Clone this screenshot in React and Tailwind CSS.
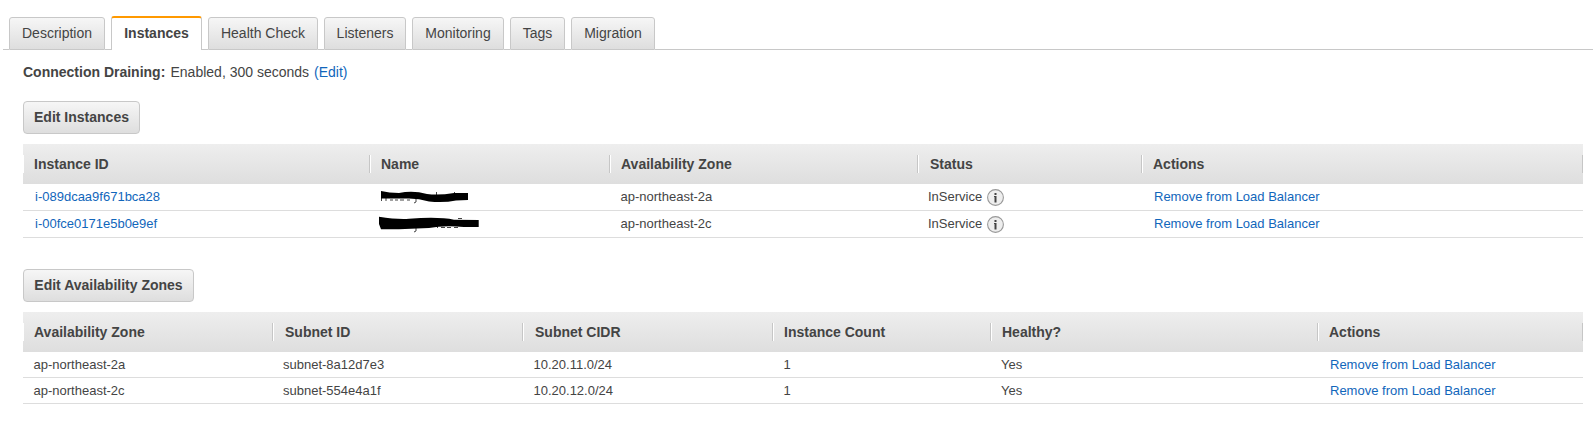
import React from "react";

const tabs = [
  { label: "Description", width: "w-24" },
  { label: "Instances", width: "w-[91px]", active: true },
  { label: "Health Check", width: "w-[110px]" },
  { label: "Listeners", width: "w-[82px]" },
  { label: "Monitoring", width: "w-[92px]" },
  { label: "Tags", width: "w-[55px]" },
  { label: "Migration", width: "w-[84px]" },
];

function Tab({ label, width, active }) {
  if (active) {
    return (
      <button
        className={`${width} h-[34px] shrink-0 rounded-t-[3px] border-x border-t-2 border-x-[#c8c8c8] border-t-[#f90] bg-white pb-[3px] text-center font-bold`}
      >
        {label}
      </button>
    );
  }
  return (
    <button
      className={`${width} h-[33px] shrink-0 rounded-t-[3px] border border-[#c8c8c8] bg-linear-to-b from-[#f6f6f6] to-[#dedede] pb-0.5 text-center`}
    >
      {label}
    </button>
  );
}

function ActionButton({ children, width }) {
  return (
    <button
      className={`${width} h-[33px] rounded-[4px] border border-[#c8c8c8] bg-linear-to-b from-[#f6f6f6] to-[#dedede] pb-0.5 text-center font-bold whitespace-nowrap`}
    >
      {children}
    </button>
  );
}

function HeaderRow({ columns, grid }) {
  return (
    <div className={`grid h-10 items-center bg-linear-to-b from-[#eeeeee] to-[#dedede] font-bold ${grid}`}>
      {columns.map((c) => (
        <div
          key={c}
          className={`flex h-[18px] items-center border-r border-l border-l-white border-r-[#c6c6c6] whitespace-nowrap ${
            c.startsWith("S") ? "pl-[11px]" : "pl-[10px]"
          }`}
        >
          {c}
        </div>
      ))}
    </div>
  );
}

function InfoIcon() {
  return (
    <svg width="17" height="17" viewBox="0 0 17 17" className="mt-px ml-[5px] shrink-0">
      <circle cx="8.5" cy="8.5" r="7.9" fill="#eeeeee" stroke="#999999" strokeWidth="1.1" />
      <rect x="7.5" y="4" width="2" height="2" fill="#444" />
      <path d="M7 7h2.500v6.500h-2V8H7z" fill="#444" />
    </svg>
  );
}

function Link({ children, className = "" }) {
  return (
    <a href="#" className={`text-[#1166bb] ${className}`}>
      {children}
    </a>
  );
}

const scribbles = {
  first:
    "M2 3Q10 5 20 5Q34 2 48 6Q60 7.500 75 5L89 5V12L77 12.500Q65 15 50 13.500Q40 10.500 30 10.500L2 10.500Z",
  second:
    "M0 1.700Q18 4.500 30 3.700Q60 1.500 75 4.700L99.700 5V12L85 12Q65 10 50 13L20 14.300L2 14.300L0 9Z",
};

const marks = {
  first: "M2.500 10v3M7 10v3M11 12h3M16 12h3M21 12h4M28 12h3M37 10v4l-2 1M57.500 4v4M75.500 4v3",
  second: "M37 13v3l-2 1M47 12.500h3M58.500 11v2M62 12.500h4M68 12.500h4M75 12.500h4M79 3.500h4",
};

function Redacted({ shape }) {
  return (
    <svg width="100" height="18" viewBox="0 0 100 18" className="ml-[9px]">
      <path d={marks[shape]} fill="none" stroke="#444" strokeWidth="1" />
      <path d={scribbles[shape]} fill="#000" />
    </svg>
  );
}

const instances = [
  { id: "i-089dcaa9f671bca28", shape: "first", zone: "ap-northeast-2a" },
  { id: "i-00fce0171e5b0e9ef", shape: "second", zone: "ap-northeast-2c" },
];

const zones = [
  { zone: "ap-northeast-2a", subnet: "subnet-8a12d7e3", cidr: "10.20.11.0/24" },
  { zone: "ap-northeast-2c", subnet: "subnet-554e4a1f", cidr: "10.20.12.0/24" },
];

const instanceGrid = "grid-cols-[347px_240px_308px_224px_441px]";
const zoneGrid = "grid-cols-[250px_250px_250px_218px_327px_265px]";

export default function App() {
  return (
    <div className="h-[423px] w-[1593px] overflow-hidden bg-white font-['Liberation_Sans',Arial,sans-serif] text-sm text-[#444]">
      <div className="flex h-[50px] pl-[3px]">
        <div className="w-1.5 border-b border-[#c8c8c8]" />
        {tabs.map((t) => (
          <React.Fragment key={t.label}>
            <div className="flex items-end">
              <Tab {...t} />
            </div>
            <div className="w-1.5 border-b border-[#c8c8c8]" />
          </React.Fragment>
        ))}
        <div className="grow border-b border-[#c8c8c8]" />
      </div>

      <div className="pl-[23px]">
        <div className="mt-3 flex h-5 items-center">
          <span className="w-[147.500px] font-bold whitespace-nowrap">Connection Draining:</span>
          <span className="w-[143.500px] whitespace-nowrap">Enabled, 300 seconds</span>
          <Link>(Edit)</Link>
        </div>

        <div className="mt-[19px] flex">
          <ActionButton width="w-[117px]">Edit Instances</ActionButton>
        </div>

        <div className="mt-2.5 w-[1560px]">
          <HeaderRow
            columns={["Instance ID", "Name", "Availability Zone", "Status", "Actions"]}
            grid={instanceGrid}
          />
          {instances.map((r) => (
            <div
              key={r.id}
              className={`grid h-[27px] items-center border-b border-[#dddddd] text-[13px] ${instanceGrid}`}
            >
              <Link className="pl-3">{r.id}</Link>
              <Redacted shape={r.shape} />
              <span className="pl-[10.500px]">{r.zone}</span>
              <span className="flex items-center pl-[10px]">
                InService
                <InfoIcon />
              </span>
              <Link className="pl-3">Remove from Load Balancer</Link>
            </div>
          ))}
        </div>

        <div className="mt-[31px] flex">
          <ActionButton width="w-[171px]">Edit Availability Zones</ActionButton>
        </div>

        <div className="mt-2.5 w-[1560px]">
          <HeaderRow
            columns={["Availability Zone", "Subnet ID", "Subnet CIDR", "Instance Count", "Healthy?", "Actions"]}
            grid={zoneGrid}
          />
          {zones.map((r) => (
            <div
              key={r.zone}
              className={`grid h-[26px] items-center border-b border-[#dddddd] pt-px text-[13px] ${zoneGrid}`}
            >
              <span className="pl-[10.500px]">{r.zone}</span>
              <span className="pl-[10px]">{r.subnet}</span>
              <span className="pl-[10.500px]">{r.cidr}</span>
              <span className="pl-[10.500px]">1</span>
              <span className="pl-[10px]">Yes</span>
              <Link className="pl-3">Remove from Load Balancer</Link>
            </div>
          ))}
        </div>
      </div>
    </div>
  );
}
